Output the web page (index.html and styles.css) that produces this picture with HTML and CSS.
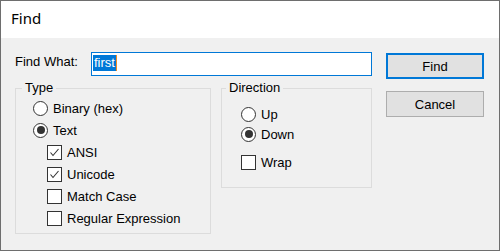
FILE: index.html
```html
<!DOCTYPE html>
<html lang="en">
<head>
    <meta charset="UTF-8">
    <title>Find</title>
    <link rel="stylesheet" href="styles.css">
</head>
<body>
    <div class="window">
        <div class="titlebar">Find</div>

        <div class="content">
            <div class="main">
                <div class="find-row">
                    <label class="find-label">Find What:</label>
                    <div class="input"><span class="selection">first</span><span class="caret"></span></div>
                </div>

                <div class="groups">
                    <!-- Type options -->
                    <fieldset class="group group-type">
                        <legend>Type</legend>
                        <div class="options">
                            <div class="opt"><span class="radio"></span>Binary (hex)</div>
                            <div class="opt"><span class="radio checked"></span>Text</div>
                            <div class="opt sub">
                                <span class="check"><svg width="13" height="13" viewBox="0 0 13 13"><polyline points="2.5,6.5 5,9.5 10.5,3" fill="none" stroke="#333" stroke-width="1.1"/></svg></span>ANSI
                            </div>
                            <div class="opt sub">
                                <span class="check"><svg width="13" height="13" viewBox="0 0 13 13"><polyline points="2.5,6.5 5,9.5 10.5,3" fill="none" stroke="#333" stroke-width="1.1"/></svg></span>Unicode
                            </div>
                            <div class="opt sub"><span class="check"></span>Match Case</div>
                            <div class="opt sub"><span class="check"></span>Regular Expression</div>
                        </div>
                    </fieldset>

                    <!-- Direction options -->
                    <fieldset class="group group-dir">
                        <legend>Direction</legend>
                        <div class="options">
                            <div class="opt short"><span class="radio"></span>Up</div>
                            <div class="opt short"><span class="radio checked"></span>Down</div>
                            <div class="opt short wrap"><span class="check"></span>Wrap</div>
                        </div>
                    </fieldset>
                </div>
            </div>

            <div class="buttons">
                <button class="btn btn-default">Find</button>
                <button class="btn">Cancel</button>
            </div>
        </div>
    </div>
</body>
</html>
```

FILE: styles.css
```css
:root {
    --face: #f0f0f0;
    --accent: #0078d7;
    --btn-face: #e1e1e1;
    --btn-border: #adadad;
    --group-line: #dcdcdc;
    --ink: #000000;
    --control: #333333;
}

* {
    box-sizing: border-box;
}

body {
    margin: 0;
    font-family: 'Liberation Sans', Arial, sans-serif;
    font-size: 13px;
    color: var(--ink);
}

.window {
    width: 500px;
    height: 251px;
    border: 1px solid #6e6e6e;
    background-color: var(--face);
    display: flex;
    flex-direction: column;
}

.titlebar {
    height: 37px;
    background-color: #ffffff;
    padding-left: 10px;
    font-family: 'Noto Sans', sans-serif;
    font-size: 15px;
    line-height: 35px;
}

.content {
    display: flex;
    gap: 14px;
    padding: 14px 0 0 14px;
}

.main {
    width: 357px;
}

.find-row {
    display: flex;
    height: 24px;
}

.find-label {
    width: 76px;
    padding-top: 2px;
    line-height: 15px;
}

.input {
    flex: 1;
    border: 1px solid var(--accent);
    background-color: #ffffff;
    padding: 2px 0 0 1px;
    display: flex;
    align-items: flex-start;
}

.selection {
    background-color: var(--accent);
    color: #ffffff;
    line-height: 16px;
    padding: 0 1px 0 1px;
}

.caret {
    width: 1px;
    height: 16px;
    background-color: #f08a24;
}

.groups {
    display: flex;
    align-items: flex-start;
    gap: 10px;
    margin-top: 5px;
}

.group {
    margin: 0;
    padding: 0;
    border: 1px solid var(--group-line);
    min-width: 0;
}

.group legend {
    margin-left: 6px;
    padding: 0 3px;
    line-height: 14px;
}

.group-type {
    width: 196px;
}

.group-type .options {
    padding: 2px 0 4px 17px;
}

.group-dir {
    width: 151px;
}

.group-dir legend {
    margin-left: 4px;
}

.group-dir .options {
    padding: 9px 0 15px 19px;
}

.opt {
    display: flex;
    align-items: center;
    height: 22px;
}

.opt.sub {
    margin-left: 14px;
}

.opt.short {
    height: 20px;
}

.opt.wrap {
    margin-top: 8px;
}

.radio {
    width: 15px;
    height: 15px;
    border: 1px solid var(--control);
    border-radius: 50%;
    background-color: #ffffff;
    margin-right: 5px;
    display: flex;
    align-items: center;
    justify-content: center;
}

.radio.checked::after {
    content: "";
    width: 8px;
    height: 8px;
    border-radius: 50%;
    background-color: var(--control);
}

.check {
    width: 15px;
    height: 15px;
    border: 1px solid var(--control);
    background-color: #ffffff;
    margin-right: 5px;
    display: flex;
}

.buttons {
    display: flex;
    flex-direction: column;
    gap: 12px;
    padding-top: 1px;
}

.btn {
    width: 98px;
    height: 26px;
    margin: 0;
    padding: 0;
    border: 1px solid var(--btn-border);
    background-color: var(--btn-face);
    font-family: inherit;
    font-size: 13px;
    color: var(--ink);
}

.btn-default {
    border: 2px solid var(--accent);
}
```
